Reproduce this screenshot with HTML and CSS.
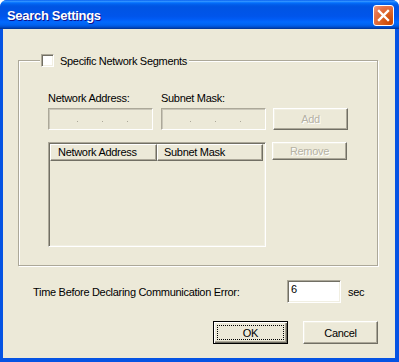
FILE: index.html
```html
<!DOCTYPE html>
<html lang="en">
<head>
  <meta charset="UTF-8" />
  <title>Search Settings</title>
  <link rel="stylesheet" href="styles.css">
</head>
<body>

  <div class="window">
    <div class="titlebar">
      <span class="title">Search Settings</span>
      <button class="close" aria-label="Close">
        <svg width="13" height="13" viewBox="0 0 13 13">
          <path d="M2 2 L11 11 M11 2 L2 11" stroke="#fff" stroke-width="2.4" stroke-linecap="square" fill="none"/>
        </svg>
      </button>
    </div>

    <div class="client">
      <div class="group">
        <div class="legend">
          <span class="check"></span>
          <span>Specific Network Segments</span>
        </div>

        <div class="row top-row">
          <div class="field">
            <div class="label">Network Address:</div>
            <div class="ip"><i></i><i></i><i></i></div>
          </div>
          <div class="field">
            <div class="label">Subnet Mask:</div>
            <div class="ip"><i></i><i></i><i></i></div>
          </div>
          <button class="btn disabled">Add</button>
        </div>

        <div class="row list-row">
          <div class="listview">
            <div class="lv-head">
              <span class="lv-col first">Network Address</span>
              <span class="lv-col">Subnet Mask</span>
            </div>
          </div>
          <button class="btn disabled small">Remove</button>
        </div>
      </div>

      <div class="timeout">
        <span class="timeout-label">Time Before Declaring Communication Error:</span>
        <div class="edit">6</div>
        <span class="unit">sec</span>
      </div>

      <div class="actions">
        <button class="btn default"><span class="focus">OK</span></button>
        <button class="btn">Cancel</button>
      </div>
    </div>
  </div>

</body>
</html>
```

FILE: styles.css
```css
body {
  margin: 0;
  background: #fff;
  font-family: 'Liberation Sans', Arial, sans-serif;
  font-size: 11px;
  letter-spacing: -0.3px;
  color: #000;
}

.window {
  width: 399px;
  height: 362px;
  box-sizing: border-box;
  background: #0553e3;
  border-radius: 7px 7px 0 0;
  overflow: hidden;
  display: flex;
  flex-direction: column;
}

/* Title bar */
.titlebar {
  height: 29px;
  flex: none;
  display: flex;
  align-items: center;
  justify-content: space-between;
  padding: 0 5px 0 7px;
  background: linear-gradient(to bottom, #0058ee 0%, #3593ff 4%, #288eff 6%, #127dff 8%, #036ffc 10%, #0262ee 14%, #0057e5 20%, #0054e3 24%, #0055eb 56%, #005bf5 66%, #026afe 76%, #0062ef 86%, #0052d6 92%, #0040ab 97%, #003092 100%);
}

.title {
  color: #fff;
  font-weight: bold;
  font-size: 13px;
  letter-spacing: -0.3px;
  text-shadow: 1px 1px #0f1089;
  padding-top: 1px;
}

.close {
  width: 21px;
  height: 21px;
  padding: 0;
  margin-top: 1px;
  border: 1px solid #fff;
  border-radius: 3px;
  background: radial-gradient(circle at 85% 85%, #cc4600 0%, #dc6527 45%, #e5714a 70%, #f09a80 100%);
  display: flex;
  align-items: center;
  justify-content: center;
}

/* Client area */
.client {
  flex: 1;
  margin: 0 4px 4px 3px;
  background: #ece9d8;
  padding-top: 31px;
}

.group {
  margin-left: 15px;
  width: 360px;
  box-sizing: border-box;
  border: 1px solid #aca899;
  box-shadow: inset 1px 1px 0 #fff, 1px 1px 0 #fff;
  padding: 0 0 18px 29px;
}

.legend {
  display: inline-flex;
  align-items: center;
  gap: 6px;
  height: 13px;
  margin: -7px 0 0 -8px;
  padding: 0 2px 0 1px;
  background: #ece9d8;
  vertical-align: top;
}

.check {
  width: 13px;
  height: 13px;
  box-sizing: border-box;
  background: #fff;
  border: 1px solid;
  border-color: #aca899 #fff #fff #aca899;
  box-shadow: inset 1px 1px 0 #716f64, inset -1px -1px 0 #f1efe2;
}

.row {
  display: flex;
  align-items: flex-end;
}

.top-row {
  margin-top: 19px;
}

.list-row {
  margin-top: 12px;
  align-items: flex-start;
}

.field {
  width: 105px;
  margin-right: 8px;
}

.label {
  line-height: 13px;
  margin-bottom: 3px;
}

.ip {
  height: 22px;
  box-sizing: border-box;
  border: 1px solid;
  border-color: #aca899 #fff #fff #aca899;
  box-shadow: inset 1px 1px 0 #c9c6b8;
  display: flex;
  justify-content: center;
  gap: 24px;
  padding: 12px 0 0 3px;
}

.ip i {
  width: 1px;
  height: 1px;
  background: #aca899;
}

/* Buttons */
.btn {
  font: inherit;
  letter-spacing: inherit;
  width: 75px;
  height: 22px;
  padding: 0;
  background: #ece9d8;
  color: #000;
  border: 1px solid;
  border-color: #fff #716f64 #716f64 #fff;
  box-shadow: inset -1px -1px 0 #aca899, inset 1px 1px 0 #f1efe2;
}

.btn.disabled {
  color: #b5b2a4;
  text-shadow: 1px 1px 0 #fff;
  margin-left: -1px;
}

.btn.small {
  height: 18px;
}

.btn.default {
  border: 1px solid #000;
  box-shadow: inset 1px 1px 0 #fff, inset -1px -1px 0 #716f64, inset -2px -2px 0 #aca899;
  padding: 3px;
}

.focus {
  display: flex;
  align-items: center;
  justify-content: center;
  height: 100%;
  box-sizing: border-box;
  border: 1px dotted #000;
}

/* List view */
.listview {
  width: 218px;
  height: 105px;
  box-sizing: border-box;
  margin-right: 7px;
  border: 1px solid;
  border-color: #aca899 #fff #fff #aca899;
  box-shadow: inset 1px 1px 0 #716f64, inset -1px -1px 0 #f1efe2;
  padding: 1px 2px 1px 1px;
}

.lv-head {
  display: flex;
  height: 17px;
}

.lv-col {
  flex: 1;
  box-sizing: border-box;
  line-height: 15px;
  padding-left: 6px;
  border: 1px solid;
  border-color: #fff #716f64 #716f64 #fff;
  box-shadow: inset -1px -1px 0 #aca899;
}

.lv-col.first {
  flex: none;
  width: 107px;
  padding-left: 7px;
}

/* Timeout row */
.timeout {
  display: flex;
  align-items: center;
  margin-top: 14px;
  padding-left: 30px;
}

.timeout-label {
  width: 254px;
}

.edit {
  width: 54px;
  height: 23px;
  box-sizing: border-box;
  background: #fff;
  border: 1px solid;
  border-color: #aca899 #fff #fff #aca899;
  box-shadow: inset 1px 1px 0 #716f64, inset -1px -1px 0 #f1efe2;
  padding: 2px 0 0 3px;
  line-height: 13px;
}

.unit {
  margin-left: 7px;
}

.actions {
  display: flex;
  justify-content: flex-end;
  gap: 15px;
  margin-top: 18px;
  padding-right: 17px;
}

.actions .btn {
  height: 23px;
}
```
